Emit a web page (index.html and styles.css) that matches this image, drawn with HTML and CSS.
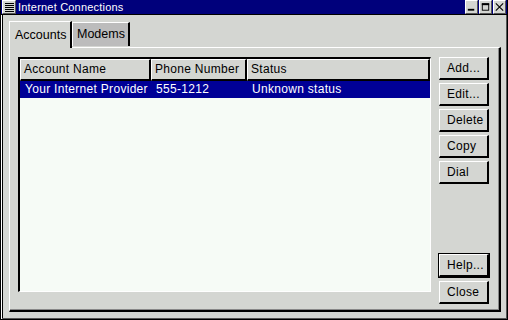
FILE: index.html
```html
<!DOCTYPE html>
<html lang="en">
<head>
  <meta charset="UTF-8">
  <title>Internet Connections</title>
  <link rel="stylesheet" href="styles.css">
</head>
<body>
  <div class="window">
    <div class="titlebar">
      <div class="menu-btn">
        <svg width="11" height="11" viewBox="0 0 11 11"><path d="M1 1.5h9M1 3.5h9M1 5.5h9M1 7.5h9M1 9.5h9" stroke="#000" stroke-width="1"/></svg>
      </div>
      <div class="title">Internet Connections</div>
      <div class="win-btn">
        <svg width="12" height="12" viewBox="0 0 12 12"><rect x="2" y="8" width="7" height="2" fill="#000"/></svg>
      </div>
      <div class="win-btn">
        <svg width="12" height="12" viewBox="0 0 12 12"><rect x="2.5" y="2.5" width="7" height="7" fill="none" stroke="#000"/><rect x="2" y="2" width="8" height="2" fill="#000"/></svg>
      </div>
      <div class="win-btn">
        <svg width="12" height="12" viewBox="0 0 12 12"><path d="M2 2L10 10M10 2L2 10" stroke="#000" stroke-width="1.2"/></svg>
      </div>
    </div>
    <div class="body">
      <div class="tabs">
        <div class="tab active">Accounts</div>
        <div class="tab">Modems</div>
      </div>
      <div class="pane">
        <div class="list">
          <div class="list-head">
            <div class="col c1">Account Name</div>
            <div class="col c2">Phone Number</div>
            <div class="col c3">Status</div>
          </div>
          <div class="row selected">
            <div class="cell c1">Your Internet Provider</div>
            <div class="cell c2">555-1212</div>
            <div class="cell c3">Unknown status</div>
          </div>
        </div>
        <div class="actions">
          <div class="btn">Add...</div>
          <div class="btn">Edit...</div>
          <div class="btn">Delete</div>
          <div class="btn">Copy</div>
          <div class="btn">Dial</div>
          <div class="spacer"></div>
          <div class="btn default">Help...</div>
          <div class="btn">Close</div>
        </div>
      </div>
    </div>
  </div>
</body>
</html>
```

FILE: styles.css
```css
* {
  margin: 0;
  padding: 0;
  box-sizing: border-box;
}

body {
  width: 508px;
  height: 320px;
  overflow: hidden;
  background: #d4d6d2;
  font-family: "Liberation Sans", Arial, sans-serif;
  font-size: 12px;
  letter-spacing: 0.3px;
  color: #000;
}

.window {
  width: 508px;
  height: 320px;
  display: flex;
  flex-direction: column;
  background: #d4d6d2;
  border: 1px solid #000;
  border-top: none;
}

.titlebar {
  height: 15px;
  display: flex;
  align-items: stretch;
  background: #00007b;
  border-bottom: 1px solid #000;
}

.menu-btn,
.win-btn {
  width: 13px;
  display: flex;
  justify-content: center;
  align-items: center;
  background: #d4d6d2;
  border-top: 1px solid #fff;
  border-left: 1px solid #fff;
  border-right: 1px solid #555;
  border-bottom: 1px solid #555;
}

.menu-btn {
  width: 14px;
  margin-left: 1px;
}

.win-btn {
  margin-right: 1px;
}

.title {
  flex: 1;
  color: #fff;
  font-size: 11px;
  letter-spacing: 0.2px;
  line-height: 14px;
  padding-left: 2px;
}

.body {
  flex: 1;
  display: flex;
  flex-direction: column;
  padding: 5px 6px 7px 7px;
  border-left: 1px solid #fff;
  box-shadow: inset -1px -1px 0 #555, inset 1px 0 0 #000;
}

.tabs {
  display: flex;
  align-items: flex-end;
  height: 27px;
}

.tab {
  width: 58px;
  padding-left: 4px;
  height: 24px;
  line-height: 22px;
  font-size: 12.5px;
  letter-spacing: 0;
  white-space: nowrap;
  background: #bcbcbc;
  border-top: 1px solid #fff;
  border-left: 1px solid #fff;
  border-right: 2px solid #000;
  margin-bottom: 1px;
}

.tab.active {
  width: 63px;
  height: 27px;
  line-height: 26px;
  padding-left: 5px;
  background: #d4d6d2;
  margin-bottom: -1px;
  position: relative;
  z-index: 1;
}

.pane {
  flex: 1;
  display: flex;
  padding: 9px 10px 6px 8px;
  border-top: 1px solid #fff;
  border-left: 1px solid #fff;
  border-right: 2px solid #000;
  border-bottom: 2px solid #000;
  box-shadow: inset -1px -1px 0 #888;
}

.list {
  width: 414px;
  margin-bottom: 12px;
  display: flex;
  flex-direction: column;
  background: #f6fbf6;
  border-top: 2px solid #000;
  border-left: 2px solid #000;
  border-right: 1px solid #fff;
  border-bottom: 1px solid #fff;
}

.list-head {
  display: flex;
  height: 22px;
}

.col {
  background: #d4d6d2;
  border-top: 1px solid #fff;
  border-left: 1px solid #fff;
  border-right: 2px solid #000;
  border-bottom: 2px solid #000;
  line-height: 18px;
  padding-left: 3px;
}

.c1 { width: 131px; }
.c2 { width: 96px; }
.c3 { flex: 1; }

.row {
  display: flex;
  height: 17px;
  line-height: 16px;
}

.row.selected {
  background: #000096;
  color: #fff;
}

.cell {
  padding-left: 5px;
  white-space: nowrap;
}

.actions {
  display: flex;
  flex-direction: column;
  gap: 3px;
  margin-left: 8px;
}

.spacer {
  flex: 1;
}

.btn {
  width: 50px;
  height: 23px;
  line-height: 20px;
  padding-left: 7px;
  background: #d4d6d2;
  border-top: 1px solid #fff;
  border-left: 1px solid #fff;
  border-right: 2px solid #000;
  border-bottom: 2px solid #000;
}

.btn.default {
  outline: 1px solid #000;
  margin-bottom: 1px;
}
```
